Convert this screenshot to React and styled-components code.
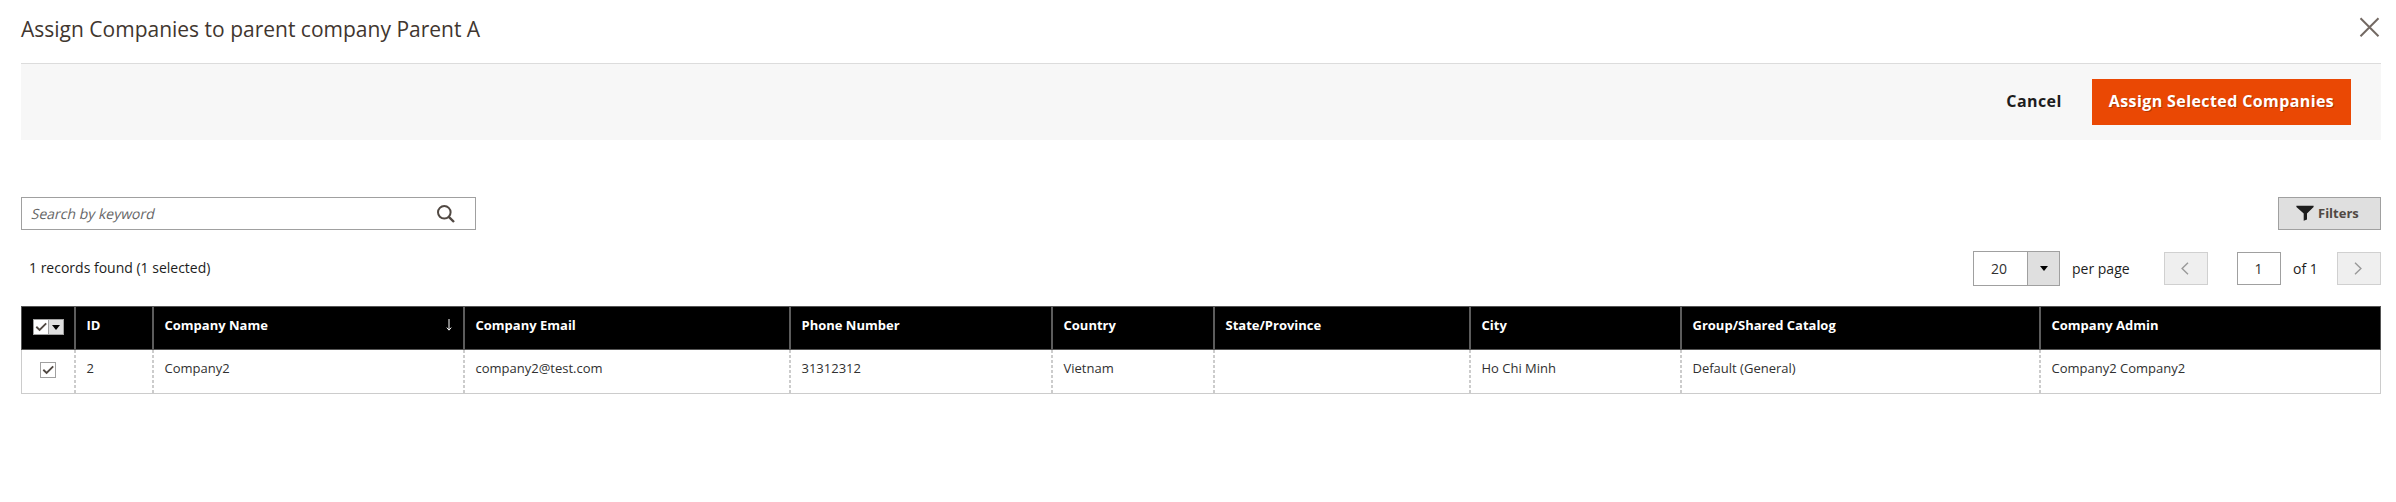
import React from 'react';
import styled, { createGlobalStyle } from 'styled-components';

const GlobalStyle = createGlobalStyle`
  *, *::before, *::after { box-sizing: border-box; }
  body {
    margin: 0;
    background: #fff;
    color: #1d1d1d;
    font-family: 'Open Sans', 'Noto Sans', sans-serif;
    font-size: 14px;
  }
  button, input { font-family: inherit; }
`;

const Modal = styled.main`
  width: 2360px;
  margin-left: 21px;
`;

const Header = styled.header`
  display: flex;
  justify-content: space-between;
  height: 63px;
  padding: 14px 1px 0 0;
`;

const Title = styled.h1`
  margin: 0;
  font-size: 21px;
  line-height: 30px;
  font-weight: 400;
  color: #41362f;
`;

const CloseButton = styled.button`
  display: flex;
  width: 21px;
  height: 21px;
  margin-top: 3px;
  padding: 0;
  border: 0;
  background: none;
`;

const ActionBar = styled.div`
  display: flex;
  justify-content: flex-end;
  align-items: center;
  height: 77px;
  padding: 1px 30px 0 0;
  border-top: 1px solid #dcdcdc;
  background: #f7f7f7;
`;

const ActionButton = styled.button`
  height: 46px;
  margin-bottom: 1px;
  padding: 0 0 2px;
  width: ${(p) => (p.$primary ? 259 : 116)}px;
  border: 0;
  background: ${(p) => (p.$primary ? '#ea4804' : 'transparent')};
  color: ${(p) => (p.$primary ? '#fff' : '#1d1d1d')};
  text-shadow: ${(p) => (p.$primary ? '1px 1px 0 rgba(0, 0, 0, 0.25)' : 'none')};
  font-size: 16px;
  font-weight: 700;
  letter-spacing: 0.4px;
`;

const SearchRow = styled.div`
  display: flex;
  justify-content: space-between;
  margin-top: 57px;
`;

const SearchBox = styled.div`
  display: flex;
  align-items: center;
  justify-content: space-between;
  width: 455px;
  height: 33px;
  padding: 0 20px 0 10px;
  border: 1px solid #a0a0a0;
`;

const SearchInput = styled.input`
  width: 300px;
  padding: 0;
  border: 0;
  outline: 0;
  font-size: 14px;
  transform: skewX(-13deg);
  &::placeholder {
    color: #666;
    opacity: 1;
  }
`;

const FilterButton = styled.button`
  display: flex;
  align-items: center;
  gap: 4px;
  width: 103px;
  height: 33px;
  padding: 0 0 1px 17px;
  border: 1px solid #a0a0a0;
  background: #dfdfdf;
  color: #514943;
  font-size: 13px;
  font-weight: 700;
`;

const PagingRow = styled.div`
  display: flex;
  justify-content: space-between;
  align-items: center;
  height: 35px;
  margin-top: 21px;
`;

const Records = styled.div`
  padding: 0 0 2px 8px;
`;

const Paging = styled.div`
  display: flex;
  align-items: center;
`;

const SizeSelect = styled.div`
  display: flex;
  width: 87px;
  height: 35px;
  border: 1px solid #a0a0a0;
`;

const SizeValue = styled.div`
  width: 53px;
  padding: 1px 3px 0 0;
  line-height: 32px;
  text-align: center;
  color: #303030;
`;

const SizeArrow = styled.div`
  display: flex;
  align-items: center;
  justify-content: center;
  flex: 1;
  border-left: 1px solid #a0a0a0;
  background: #dfdfdf;
`;

const PagingText = styled.span`
  width: ${(p) => p.$width}px;
  padding-left: 12px;
  line-height: 34px;
  white-space: nowrap;
`;

const PageButton = styled.button`
  display: flex;
  align-items: center;
  justify-content: center;
  width: 44px;
  height: 33px;
  padding: 0 2px 1px 0;
  border: 1px solid #d0d0d0;
  background: #efefef;
`;

const PageInput = styled.input`
  width: 44px;
  height: 33px;
  margin-left: 29px;
  padding: 0 1px 0 0;
  border: 1px solid #a0a0a0;
  background: #fff;
  color: #303030;
  text-align: center;
  font-size: 14px;
`;

const Table = styled.div`
  margin-top: 20px;
`;

const Row = styled.div`
  display: grid;
  grid-template-columns: 54px 78px 311px 326px 262px 162px 256px 211px 359px 339px;
  height: 44px;
  border: solid ${(p) => (p.$head ? '#555' : '#ccc')};
  border-width: ${(p) => (p.$head ? '1px' : '0 1px 1px')};
  background: ${(p) => (p.$head ? '#000' : '#fff')};
  color: ${(p) => (p.$head ? '#fff' : '#303030')};
  font-size: 13px;
  font-weight: ${(p) => (p.$head ? 700 : 400)};
  line-height: 18px;
`;

const Cell = styled.div`
  display: flex;
  justify-content: space-between;
  padding: 9px 13px 0 10.5px;
  background: ${(p) =>
    p.$head
      ? 'linear-gradient(#5c5c5c, #5c5c5c)'
      : 'repeating-linear-gradient(#ccc 0 3px, transparent 3px 5px)'}
    right / 2px 100% no-repeat;
  white-space: nowrap;
  &:last-child { background: none; }
`;

const SelectCell = styled(Cell)`
  justify-content: flex-start;
  padding: 12px 0 0 ${(p) => (p.$head ? 11 : 18)}px;
`;

const Check = styled.span`
  display: flex;
  align-items: center;
  justify-content: center;
  width: 16px;
  height: 16px;
  border: 1px solid #a0a0a0;
  background: #fff;
`;

const CheckMenu = styled(Check)`
  width: 15px;
  border-left: 0;
  background: #dfdfdf;
`;

const SortIcon = styled.svg`
  margin-top: 3px;
`;

const Tick = () => (
  <svg width="12" height="10" viewBox="0 0 12 10" fill="none" stroke="#514943" strokeWidth="1.9">
    <path d="M1.3 4.7 4.6 7.9 11.2 1.4" />
  </svg>
);

const Caret = () => (
  <svg width="8" height="5" viewBox="0 0 8 5">
    <path d="M0 0h8L4 5z" fill="#000" />
  </svg>
);

const Chevron = ({ right }) => (
  <svg width="8" height="13" viewBox="0 0 8 13" fill="none" stroke="#999" strokeWidth="1.4">
    <path d={right ? 'M1 .7 6.9 6.5 1 12.3' : 'M7 .7 1.1 6.5 7 12.3'} />
  </svg>
);

const SortArrow = () => (
  <SortIcon width="6" height="12" viewBox="0 0 6 12" fill="none" stroke="#fff">
    <path d="M3 0v11M.8 8.6 3 11.2l2.2-2.6" />
  </SortIcon>
);

const columns = [
  ['ID', '2'],
  ['Company Name', 'Company2'],
  ['Company Email', 'company2@test.com'],
  ['Phone Number', '31312312'],
  ['Country', 'Vietnam'],
  ['State/Province', ''],
  ['City', 'Ho Chi Minh'],
  ['Group/Shared Catalog', 'Default (General)'],
  ['Company Admin', 'Company2 Company2'],
];

export default function App() {
  return (
    <Modal>
      <GlobalStyle />
      <Header>
        <Title>Assign Companies to parent company Parent A</Title>
        <CloseButton aria-label="Close">
          <svg width="21" height="21" viewBox="0 0 21 21" stroke="#736963" strokeWidth="2">
            <path d="M1.5 1.2 19.5 19.2M19.5 1.2 1.5 19.2" />
          </svg>
        </CloseButton>
      </Header>
      <ActionBar>
        <ActionButton>Cancel</ActionButton>
        <ActionButton $primary>Assign Selected Companies</ActionButton>
      </ActionBar>
      <SearchRow>
        <SearchBox>
          <SearchInput placeholder="Search by keyword" />
          <svg width="18" height="18" viewBox="0 0 18 18" fill="none" stroke="#514943">
            <circle cx="7.3" cy="7.3" r="6.3" strokeWidth="2" />
            <path d="m11.8 11.8 5.2 5.2" strokeWidth="2.4" />
          </svg>
        </SearchBox>
        <FilterButton>
          <svg width="18" height="16" viewBox="0 0 18 16">
            <path d="M.4.7h17.2v1.3L11 8.5v6l-3.3 1.2V8.5L.4 2z" fill="#1d1d1d" />
          </svg>
          Filters
        </FilterButton>
      </SearchRow>
      <PagingRow>
        <Records>1 records found (1 selected)</Records>
        <Paging>
          <SizeSelect>
            <SizeValue>20</SizeValue>
            <SizeArrow><Caret /></SizeArrow>
          </SizeSelect>
          <PagingText $width={104}>per page</PagingText>
          <PageButton aria-label="Previous page"><Chevron /></PageButton>
          <PageInput defaultValue="1" />
          <PagingText $width={56}>of 1</PagingText>
          <PageButton aria-label="Next page"><Chevron right /></PageButton>
        </Paging>
      </PagingRow>
      <Table>
        <Row $head>
          <SelectCell $head>
            <Check><Tick /></Check>
            <CheckMenu><Caret /></CheckMenu>
          </SelectCell>
          {columns.map(([name]) => (
            <Cell $head key={name}>
              {name}
              {name === 'Company Name' && <SortArrow />}
            </Cell>
          ))}
        </Row>
        <Row>
          <SelectCell>
            <Check><Tick /></Check>
          </SelectCell>
          {columns.map(([name, value]) => (
            <Cell key={name}>{value}</Cell>
          ))}
        </Row>
      </Table>
    </Modal>
  );
}
